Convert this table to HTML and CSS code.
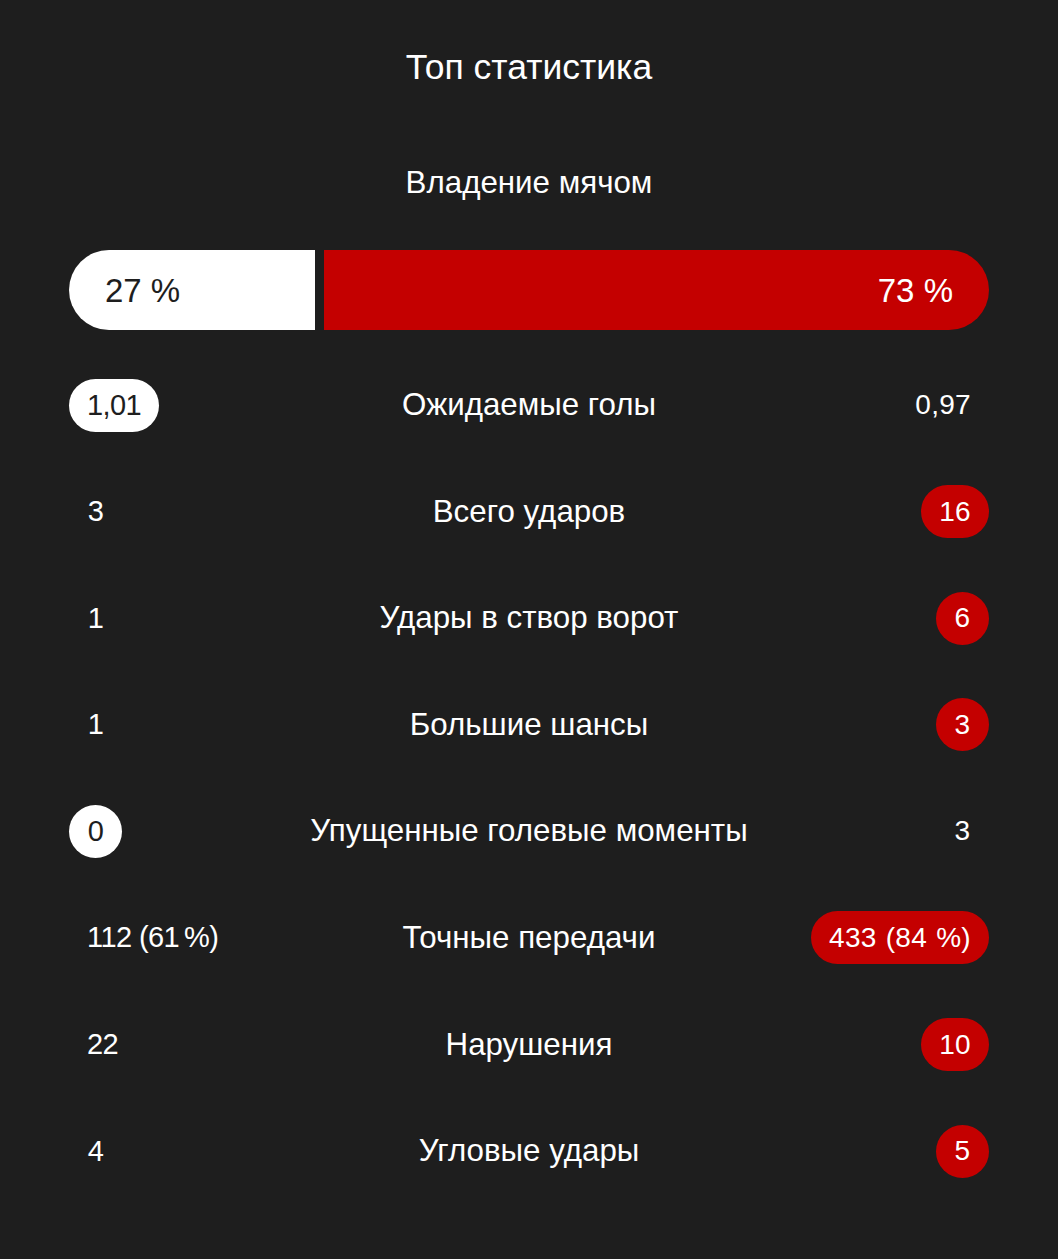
FILE: index.html
```html
<!DOCTYPE html>
<html lang="ru">
<head>
<meta charset="utf-8">
<title>Топ статистика</title>
<link rel="stylesheet" href="styles.css">
</head>
<body>
<main class="panel">
  <h1 class="title">Топ статистика</h1>
  <h2 class="label possession-label">Владение мячом</h2>
  <div class="possession" style="grid-template-columns: minmax(0, 27fr) minmax(0, 73fr)">
    <div class="poss-home">27 %</div>
    <div class="poss-away">73 %</div>
  </div>
  <ul class="rows">
    <li class="row">
      <span class="val home"><span class="pill pill-white">1,01</span></span>
      <span class="label">Ожидаемые голы</span>
      <span class="val away"><span class="pill">0,97</span></span>
    </li>
    <li class="row">
      <span class="val home"><span class="pill">3</span></span>
      <span class="label">Всего ударов</span>
      <span class="val away"><span class="pill pill-red">16</span></span>
    </li>
    <li class="row">
      <span class="val home"><span class="pill">1</span></span>
      <span class="label">Удары в створ ворот</span>
      <span class="val away"><span class="pill pill-red">6</span></span>
    </li>
    <li class="row">
      <span class="val home"><span class="pill">1</span></span>
      <span class="label">Большие шансы</span>
      <span class="val away"><span class="pill pill-red">3</span></span>
    </li>
    <li class="row">
      <span class="val home"><span class="pill pill-white">0</span></span>
      <span class="label">Упущенные голевые моменты</span>
      <span class="val away"><span class="pill">3</span></span>
    </li>
    <li class="row">
      <span class="val home"><span class="pill">112 (61<span class="thin"></span>%)</span></span>
      <span class="label">Точные передачи</span>
      <span class="val away"><span class="pill pill-red">433 (84 %)</span></span>
    </li>
    <li class="row">
      <span class="val home"><span class="pill">22</span></span>
      <span class="label">Нарушения</span>
      <span class="val away"><span class="pill pill-red">10</span></span>
    </li>
    <li class="row">
      <span class="val home"><span class="pill">4</span></span>
      <span class="label">Угловые удары</span>
      <span class="val away"><span class="pill pill-red">5</span></span>
    </li>
  </ul>
</main>
</body>
</html>
```

FILE: styles.css
```css
html, body {
  margin: 0;
  padding: 0;
  background: #1e1e1e;
}

body {
  font-family: "Liberation Sans", Arial, sans-serif;
  color: #ffffff;
}

.panel {
  box-sizing: border-box;
  width: 1058px;
  min-height: 1259px;
  padding: 47px 69px 0;
  display: flex;
  flex-direction: column;
}

.title {
  margin: 0;
  font-size: 35.5px;
  font-weight: 400;
  line-height: 40px;
  height: 40px;
  text-align: center;
}

.label {
  margin: 0;
  font-size: 31.3px;
  font-weight: 400;
  line-height: 40px;
  text-align: center;
  white-space: nowrap;
}

.possession-label {
  margin-top: 76px;
  height: 40px;
}

.possession {
  margin-top: 47px;
  height: 80px;
  display: grid;
  column-gap: 9px;
}

.poss-home,
.poss-away {
  display: flex;
  align-items: center;
  font-size: 33px;
  line-height: 1;
  padding: 0 36px;
  min-width: 0;
}

.poss-home {
  background: #ffffff;
  color: #1e1e1e;
  border-radius: 40px 0 0 40px;
}

.poss-away {
  background: #c40000;
  color: #ffffff;
  justify-content: flex-end;
  border-radius: 0 40px 40px 0;
}

.rows {
  list-style: none;
  margin: 48.5px 0 0;
  padding: 0;
  display: flex;
  flex-direction: column;
  gap: 53.6px;
}

.row {
  height: 53px;
  display: grid;
  grid-template-columns: 1fr auto 1fr;
  align-items: center;
}

.val {
  display: flex;
}

.val.away {
  justify-content: flex-end;
}

.pill {
  box-sizing: border-box;
  height: 53px;
  min-width: 53px;
  padding: 0 18px;
  border-radius: 27px;
  display: inline-flex;
  align-items: center;
  justify-content: center;
  font-size: 28px;
  line-height: 1;
  white-space: nowrap;
}

.home .pill {
  font-size: 29px;
  letter-spacing: -0.6px;
}

.thin {
  display: inline-block;
  width: 5px;
}

.away .pill {
  word-spacing: 1px;
  letter-spacing: 0.3px;
}

.pill-white {
  background: #ffffff;
  color: #1e1e1e;
}

.pill-red {
  background: #c40000;
  color: #ffffff;
}
```
